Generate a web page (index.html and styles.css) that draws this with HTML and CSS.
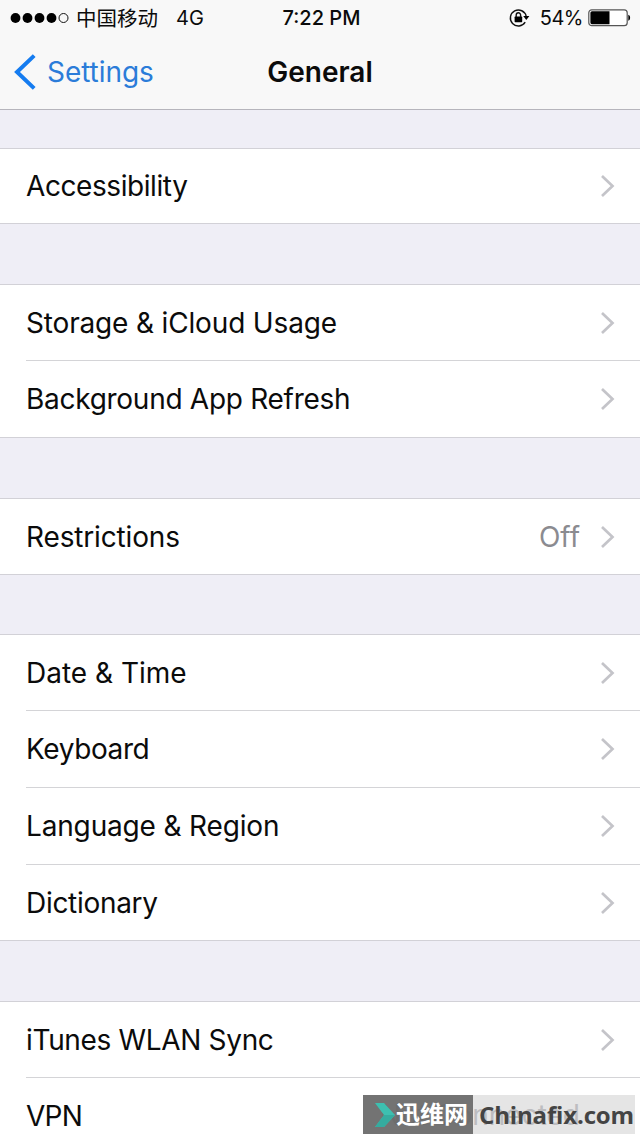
FILE: index.html
```html
<!DOCTYPE html>
<html lang="en">
<head>
<meta charset="utf-8">
<title>General</title>
<link rel="stylesheet" href="styles.css">
</head>
<body>
<svg class="defs" width="0" height="0"><symbol id="chev" viewBox="0 0 16 24"><path d="M2 2 L12.5 12 L2 22" fill="none" stroke="#c4c4c9" stroke-width="2.7"/></symbol></svg>
<header class="header">
  <div class="status">
    <div class="status-left">
      <svg class="signal" width="60" height="12" viewBox="0 0 60 12"><circle cx="5.5" cy="6" r="4.9"/><circle cx="17.5" cy="6" r="4.9"/><circle cx="29.5" cy="6" r="4.9"/><circle cx="41.5" cy="6" r="4.9"/><circle cx="53.5" cy="6" r="4.5" fill="none" stroke="#111" stroke-width="1"/></svg>
      <span class="carrier">中国移动</span><span class="network">4G</span>
    </div>
    <div class="time">7:22 PM</div>
    <div class="status-right">
      <svg class="lock" width="22" height="20" viewBox="0 0 22 20"><path d="M16.2 14.2A8 8 0 1 1 17.2 8.3" fill="none" stroke="#111" stroke-width="1.4"/><path d="M14.2 8h6.2l-3.1 4z"/><rect x="5.6" y="8.6" width="7.6" height="5.6" rx=".6"/><path d="M7.2 9V7a2.2 2.2 0 0 1 4.4 0v2" fill="none" stroke="#111" stroke-width="1.4"/></svg>
      <span class="percent">54%</span>
      <svg class="battery" width="43" height="18" viewBox="0 0 43 18"><rect x=".8" y=".8" width="38.4" height="15.9" rx="3" fill="#fff" stroke="#555" stroke-width="1.2"/><path d="M4 2.2h17.5v13H4a1.6 1.6 0 0 1-1.6-1.6V3.8A1.6 1.6 0 0 1 4 2.2z"/><path d="M40.3 5.8c2.4.6 2.4 5.4 0 6z"/></svg>
    </div>
  </div>
  <nav class="nav">
    <a class="back"><svg width="23" height="36" viewBox="0 0 23 36"><path d="M21.2 1.6 4 18 21.2 34.4" fill="none" stroke="#157cf0" stroke-width="4"/></svg><span class="back-label">Settings</span></a>
    <h1 class="title">General</h1>
  </nav>
</header>
<main>
  <section class="group g1">
    <div class="row"><span class="label accessibility">Accessibility</span><svg class="chevron"><use href="#chev"/></svg></div>
  </section>
  <section class="group g2">
    <div class="row"><span class="label storage">Storage &amp; iCloud Usage</span><svg class="chevron"><use href="#chev"/></svg></div>
    <div class="row"><span class="label background">Background App Refresh</span><svg class="chevron"><use href="#chev"/></svg></div>
  </section>
  <section class="group g3">
    <div class="row"><span class="label restrictions">Restrictions</span><span class="value">Off</span><svg class="chevron"><use href="#chev"/></svg></div>
  </section>
  <section class="group g4">
    <div class="row"><span class="label date">Date &amp; Time</span><svg class="chevron"><use href="#chev"/></svg></div>
    <div class="row"><span class="label keyboard">Keyboard</span><svg class="chevron"><use href="#chev"/></svg></div>
    <div class="row"><span class="label language">Language &amp; Region</span><svg class="chevron"><use href="#chev"/></svg></div>
    <div class="row"><span class="label dictionary">Dictionary</span><svg class="chevron"><use href="#chev"/></svg></div>
  </section>
  <section class="group g5">
    <div class="row"><span class="label itunes">iTunes WLAN Sync</span><svg class="chevron"><use href="#chev"/></svg></div>
    <div class="row"><span class="label vpn">VPN</span></div>
  </section>
</main>
<aside class="watermark">
  <div class="ghost">Not Connected</div>
  <div class="mark-name"><svg width="22" height="26" viewBox="0 0 22 26"><path d="M1 1h9l11 12-11 12H1l9-12z" fill="#3dbfb0"/><path d="M10 13h11L10 25H1z" fill="#35ab9f"/></svg><span>迅维网</span></div>
  <div class="mark-site">Chinafix.com</div>
</aside>
</body>
</html>
```
FILE: styles.css
```css
* { box-sizing: border-box; }
body { margin: 0; width: 640px; height: 1139px; overflow: hidden; background: #fff; color: #0b0b0b; font-family: Inter, "Noto Sans CJK SC", sans-serif; position: relative; }
.defs { display: block; }
.header { height: 110px; background: #f8f8f8; border-bottom: 1px solid #b6b5bc; }
.status { display: grid; grid-template-columns: 1fr 100px 1fr; height: 36px; align-items: center; font-size: 20px; line-height: 36px; white-space: nowrap; }
.status-left { display: flex; align-items: center; padding-left: 10px; }
.carrier { margin-left: 6px; font-size: 20.5px; line-height: 34px; margin-top: -2px; font-family: "Noto Sans CJK SC", sans-serif; }
.network { margin-left: 18px; }
.time { text-align: center; font-weight: 500; padding-left: 3px; }
.status-right { display: flex; align-items: center; justify-content: flex-end; padding-right: 9px; }
.percent { margin-left: 10px; margin-right: 5px; letter-spacing: -.5px; }
.lock { margin-right: -1px; }
.nav { display: grid; grid-template-columns: 214px 212px 1fr; height: 72px; align-items: center; }
.back { display: flex; align-items: center; padding-left: 13px; color: #2b7cd9; font-size: 28px; }
.back-label { margin-left: 11px; letter-spacing: -.05px; }
.title { margin: 0; text-align: center; font-size: 28px; font-weight: 600; }
main { background: #efeef6; padding-top: 38px; }
.group { background: #fff; border-top: 1px solid #d2d1d7; border-bottom: 1px solid #d2d1d7; padding-left: 26px; }
.g1 { height: 76px; }
.g2 { margin-top: 60px; height: 154px; }
.g3 { margin-top: 60px; height: 77px; }
.g4 { margin-top: 59px; height: 307px; }
.g5 { margin-top: 60px; height: 138px; border-bottom: 0; }
.row { height: 76.7px; display: flex; align-items: center; padding-right: 24px; font-size: 28px; line-height: 36px; white-space: nowrap; }
.row:first-child { height: 75.4px; }
.g1 .row:first-child { height: 74px; }
.row + .row { border-top: 1px solid #d4d4d7; }
.label { flex: 1; }
.accessibility { letter-spacing: -.42px; }
.storage { letter-spacing: -.16px; }
.background { letter-spacing: -.28px; }
.restrictions { letter-spacing: -.15px; }
.keyboard { letter-spacing: -.4px; }
.language { letter-spacing: -.16px; }
.dictionary { letter-spacing: -.3px; }
.itunes { letter-spacing: -.33px; }
.vpn { letter-spacing: -.7px; }
.value { color: #8b8b90; margin-right: 20px; }
.chevron { width: 16px; height: 24px; }
.watermark { position: absolute; left: 363px; top: 1095px; width: 272px; height: 39px; display: flex; background: #e5e5e5; }
.ghost { position: absolute; right: 55px; top: 2px; font-size: 28px; line-height: 36px; color: #bdbdc0; }
.mark-name { flex: none; width: 110px; display: flex; align-items: center; background: rgba(96,96,96,.86); padding-left: 11px; color: #fff; font: 700 24px/35px "Noto Sans CJK SC", sans-serif; z-index: 1; white-space: nowrap; }
.mark-name svg { flex: none; }
.mark-name span { margin-top: -4px; }
.mark-site { z-index: 1; padding-left: 6px; font: 700 24px/39px "Open Sans", sans-serif; letter-spacing: -.15px; color: #444; }
```
